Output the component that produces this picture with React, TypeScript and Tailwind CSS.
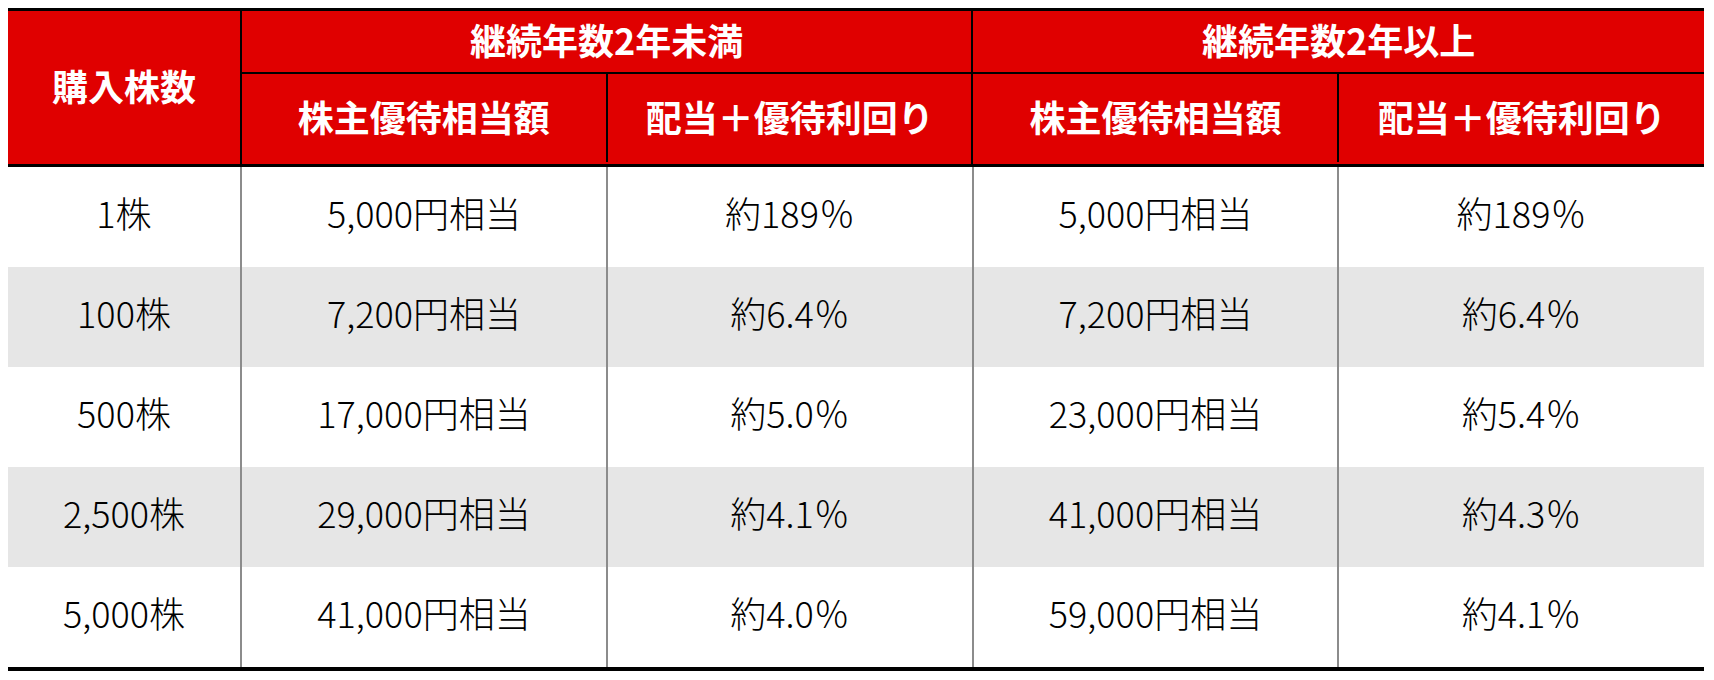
const rows = [
  { shares: "1株", a1: "5,000円相当", y1: "約189％", a2: "5,000円相当", y2: "約189％" },
  { shares: "100株", a1: "7,200円相当", y1: "約6.4％", a2: "7,200円相当", y2: "約6.4％" },
  { shares: "500株", a1: "17,000円相当", y1: "約5.0％", a2: "23,000円相当", y2: "約5.4％" },
  { shares: "2,500株", a1: "29,000円相当", y1: "約4.1％", a2: "41,000円相当", y2: "約4.3％" },
  { shares: "5,000株", a1: "41,000円相当", y1: "約4.0％", a2: "59,000円相当", y2: "約4.1％" },
];

function HeaderGroup({ title, last }: { title: string; last?: boolean }) {
  return (
    <div className={`flex flex-col ${last ? "w-[731px]" : "w-[732px] border-r-2 border-black"}`}>
      <div className="h-[63px] pb-[5px] flex items-center justify-center border-b-2 border-black">{title}</div>
      <div className="h-[88px] flex">
        <div className="w-[366px] pb-[5px] flex items-center justify-center border-r-2 border-black">株主優待相当額</div>
        <div className="flex-1 pb-[5px] flex items-center justify-center">配当＋優待利回り</div>
      </div>
    </div>
  );
}

export default function App() {
  return (
    <div className="w-[1714px] h-[680px] bg-white pt-2 pl-2" style={{ fontFamily: '"Noto Sans CJK JP", "Noto Sans", sans-serif' }}>
      <div className="w-[1696px]">
        <div className="flex bg-[#e00000] text-white font-bold text-[36px] border-t-[3px] border-b-[3px] border-black">
          <div className="w-[234px] h-[153px] pb-[5px] flex items-center justify-center border-r-2 border-black">購入株数</div>
          <HeaderGroup title="継続年数2年未満" />
          <HeaderGroup title="継続年数2年以上" last />
        </div>
        <div className="border-b-4 border-black text-[36px] font-light text-black">
          {rows.map((r, i) => (
            <div key={i} className={`flex h-[100px] ${i % 2 === 1 ? "bg-[#e6e6e6]" : "bg-white"}`}>
              <div className="w-[234px] pb-[10px] flex items-center justify-center border-r-2 border-[#8c8c8c]">{r.shares}</div>
              <div className="w-[366px] pb-[10px] flex items-center justify-center border-r-2 border-[#8c8c8c]">{r.a1}</div>
              <div className="w-[366px] pb-[10px] flex items-center justify-center border-r-2 border-[#8c8c8c]">{r.y1}</div>
              <div className="w-[365px] pb-[10px] flex items-center justify-center border-r-2 border-[#8c8c8c]">{r.a2}</div>
              <div className="flex-1 pb-[10px] flex items-center justify-center">{r.y2}</div>
            </div>
          ))}
        </div>
      </div>
    </div>
  );
}
